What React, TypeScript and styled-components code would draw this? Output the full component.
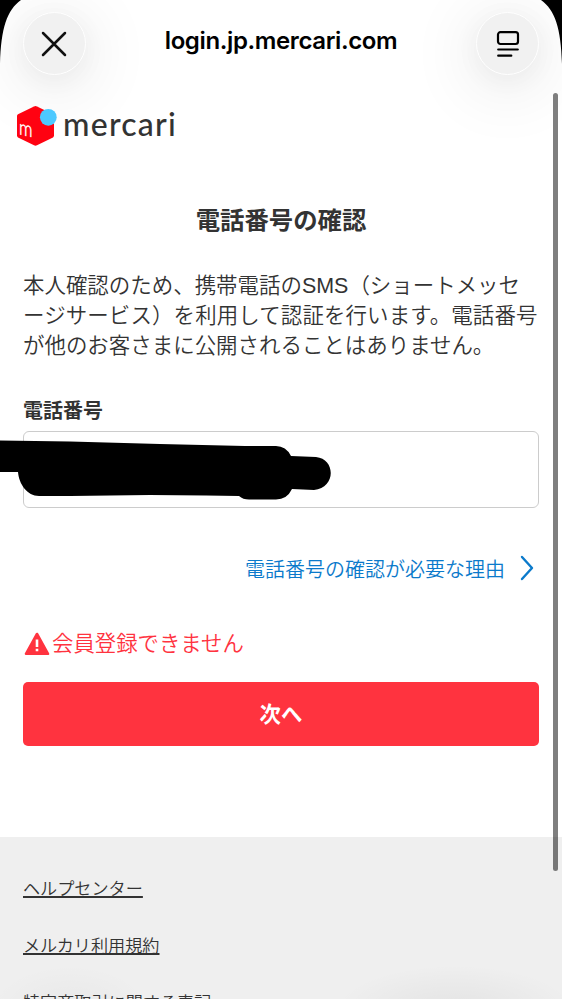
import React from "react";
import styled, { createGlobalStyle } from "styled-components";

const GlobalStyle = createGlobalStyle`
  *, *::before, *::after { box-sizing: border-box; }
  html, body { margin: 0; padding: 0; background: #000; overflow: hidden; }
`;

const Screen = styled.div`
  position: relative;
  width: 562px;
  height: 999px;
  overflow: hidden;
  background: #fff;
  color: #333;
  font-family: "Liberation Sans", "Noto Sans CJK JP", sans-serif;
  font-weight: 350;
`;

const Corner = styled.svg<{ $side: "left" | "right" }>`
  position: absolute;
  top: 0;
  ${(p) => p.$side}: 0;
  width: 24px;
  height: 64px;
  transform: ${(p) => (p.$side === "right" ? "scaleX(-1)" : "none")};
`;

const BrowserBar = styled.header`
  display: flex;
  align-items: flex-start;
  justify-content: space-between;
  height: 92px;
  padding: 12px 23px 0;
`;

const GlassButton = styled.button<{ $nudge?: number }>`
  display: flex;
  align-items: center;
  justify-content: center;
  width: 63px;
  height: 63px;
  padding: 0 ${(p) => p.$nudge ?? 0}px 0 0;
  border: 1.5px solid #fff;
  border-radius: 50%;
  background: #f1f1f1;
  box-shadow: 0 10px 64px 12px rgba(0, 0, 0, 0.07), 0 5px 26px rgba(0, 0, 0, 0.045);
`;

const Address = styled.div`
  padding-top: 13px;
  font: 600 24px/32px Inter, sans-serif;
  letter-spacing: -0.38px;
  color: #000;
  white-space: nowrap;
`;

const Brand = styled.div`
  position: relative;
  display: flex;
  align-items: center;
  height: 66px;
  padding: 1px 0 0 17px;
`;

const Wordmark = styled.span`
  margin: -4px 0 0 6px;
  font: 500 32px/40px Lato, sans-serif;
  letter-spacing: 1.25px;
  color: #333;
`;

const Content = styled.main`
  display: flex;
  flex-direction: column;
  height: 679px;
  padding: 45px 23px 0;
`;

const Title = styled.h1`
  margin: 0;
  font-size: 24.4px;
  line-height: 36px;
  font-weight: 700;
  text-align: center;
`;

const Description = styled.p`
  margin: 32px -4px 0 0;
  font-size: 21.46px;
  line-height: 30px;
  white-space: nowrap;
`;

const DescriptionLine = styled.span<{ $tracking?: number }>`
  display: block;
  letter-spacing: ${(p) => p.$tracking ?? 0}px;
`;

const Label = styled.label`
  margin-top: 36px;
  font-size: 20px;
  line-height: 28px;
  font-weight: 700;
`;

const PhoneField = styled.div`
  position: relative;
  flex: none;
  height: 77px;
  margin-top: 6px;
  border: 1.5px solid #ccc;
  border-radius: 6px;
`;

const Redaction = styled.svg`
  position: absolute;
  left: -24px;
  top: 7px;
  width: 334px;
  height: 61px;
`;

const ReasonLink = styled.a`
  display: flex;
  align-items: center;
  justify-content: flex-end;
  gap: 15px;
  height: 30px;
  margin-top: 45px;
  padding-right: 5px;
  font-size: 20px;
  line-height: 30px;
  color: #0b7acb;
`;

const LinkText = styled.span`
  padding-top: 3px;
`;

const ErrorMessage = styled.div`
  display: flex;
  align-items: center;
  gap: 2px;
  height: 32px;
  margin-top: 45px;
  padding-left: 1px;
  font-size: 21.4px;
  line-height: 32px;
  color: #ff333f;
`;

const NextButton = styled.button`
  flex: none;
  height: 64px;
  margin-top: 22px;
  padding: 0 0 2px;
  border: 0;
  border-radius: 5px;
  background: #ff333f;
  color: #fff;
  font: 700 21.4px/62px "Noto Sans CJK JP", sans-serif;
`;

const Footer = styled.footer`
  display: flex;
  flex-direction: column;
  align-items: flex-start;
  gap: 31px;
  height: 162px;
  padding: 39px 23px 0;
  background:
    radial-gradient(ellipse 120px 46px at 455px 174px, rgba(0, 0, 0, 0.05), transparent),
    radial-gradient(ellipse 80px 46px at 70px 174px, rgba(0, 0, 0, 0.03), transparent),
    #efefef;
`;

const FooterLink = styled.a`
  height: 26px;
  font-size: 17.14px;
  line-height: 26px;
  text-decoration: underline;
  text-decoration-thickness: 1.5px;
  text-underline-offset: 1px;
  text-decoration-skip-ink: none;
`;

const ScrollThumb = styled.div`
  position: absolute;
  top: 93px;
  right: 4px;
  width: 5px;
  height: 778px;
  border-radius: 3px;
  background: rgba(0, 0, 0, 0.5);
`;

const footerLinks = ["ヘルプセンター", "メルカリ利用規約", "特定商取引に関する表記"];

function CloseIcon() {
  return (
    <svg width="26" height="26" viewBox="0 0 26 26" fill="none" stroke="#111" strokeWidth="2.5" strokeLinecap="round">
      <path d="M2 2 24 24M24 2 2 24" />
    </svg>
  );
}

function PageIcon() {
  return (
    <svg width="24" height="28" viewBox="0 0 24 28" fill="none" stroke="#000" strokeLinecap="round">
      <rect x="2" y="2.2" width="20" height="11.8" rx="2.4" strokeWidth="2.2" />
      <path d="M2.2 19.5H21.8M2.2 25.7H15.3" strokeWidth="2.2" />
    </svg>
  );
}

function MercariMark() {
  return (
    <svg width="40" height="40" viewBox="0 0 40 40">
      <path d="M17 .4Q18.5-.3 20 .4L36 8.3Q37 8.8 37 10V29.6Q37 30.8 36 31.4L20 39.3Q18.5 40 17 39.3L1 31.4Q0 30.8 0 29.6V10Q0 8.8 1 8.3Z" fill="#ff0211" />
      <circle cx="31.3" cy="11.3" r="8.4" fill="#4dc9ff" />
      <text fontFamily="Lato, sans-serif" fontSize="21" fill="#fff" stroke="#fff" strokeWidth=".5" transform="translate(2 28.2) skewY(13) scale(.8 1)">m</text>
    </svg>
  );
}

function WarningIcon() {
  return (
    <svg width="26" height="24" viewBox="0 0 26 24">
      <path d="M13 2 24 21.8H2Z" fill="#ff333f" stroke="#ff333f" strokeWidth="2.6" strokeLinejoin="round" />
      <path d="M11.7 7.5H14.3V15H11.7ZM11.7 16.8H14.3V19.2H11.7Z" fill="#fff" />
    </svg>
  );
}

export default function App() {
  return (
    <>
      <GlobalStyle />
      <Screen>
        <BrowserBar>
          <GlassButton $nudge={1} aria-label="閉じる"><CloseIcon /></GlassButton>
          <Address>login.jp.mercari.com</Address>
          <GlassButton aria-label="ページ設定"><PageIcon /></GlassButton>
        </BrowserBar>
        <Brand>
          <MercariMark />
          <Wordmark>mercari</Wordmark>
        </Brand>
        <Content>
          <Title>電話番号の確認</Title>
          <Description>
            <DescriptionLine>本人確認のため、携帯電話のSMS（ショートメッセ</DescriptionLine>
            <DescriptionLine $tracking={0.12}>ージサービス）を利用して認証を行います。電話番号</DescriptionLine>
            <DescriptionLine>が他のお客さまに公開されることはありません。</DescriptionLine>
          </Description>
          <Label>電話番号</Label>
          <PhoneField>
            <Redaction viewBox="0 0 334 61">
              <path d="M0 1.5 70 2.5 160 5 245 7H276Q286 7 291 17L316 18C336 20 336 49 314 51L292 50Q287 60.5 276 60.5H249Q243 60.5 239 57L206 56.5 150 56 70 57H39C27 57 19 45 18 33H0Z" />
            </Redaction>
          </PhoneField>
          <ReasonLink>
            <LinkText>電話番号の確認が必要な理由</LinkText>
            <svg width="14" height="26" viewBox="0 0 14 26" fill="none" stroke="#0b7acb" strokeWidth="2.4" strokeLinecap="round" strokeLinejoin="round">
              <path d="M2 2 12 13 2 24" />
            </svg>
          </ReasonLink>
          <ErrorMessage><WarningIcon />会員登録できません</ErrorMessage>
          <NextButton>次へ</NextButton>
        </Content>
        <Footer>
          {footerLinks.map((label) => <FooterLink key={label}>{label}</FooterLink>)}
        </Footer>
        <Corner $side="left" viewBox="0 0 24 64"><path d="M0 0H21C7 10 1 28 0 64Z" /></Corner>
        <Corner $side="right" viewBox="0 0 24 64"><path d="M0 0H21C7 10 1 28 0 64Z" /></Corner>
        <ScrollThumb />
      </Screen>
    </>
  );
}
